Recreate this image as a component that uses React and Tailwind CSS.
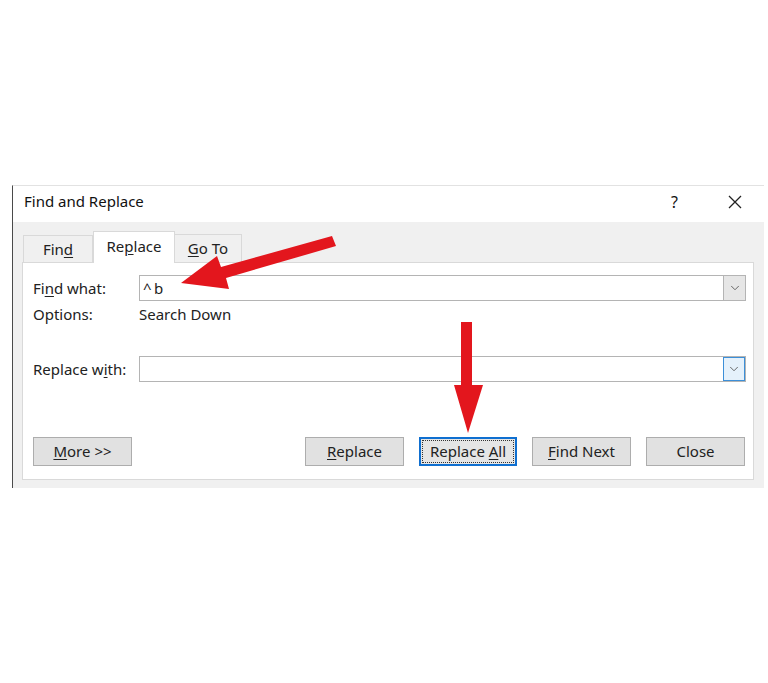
import { ChevronDown } from "lucide-react";

// ─── Small helpers ───────────────────────────────────────────────────────────
function U({ children }) {
  return <span className="underline underline-offset-2">{children}</span>;
}

function Combo({ value, focused }) {
  return (
    <div className="flex h-[26px] flex-1 border border-[#b4b4b4] bg-white">
      <div className="flex flex-1 items-center pl-[3px] text-[15px] text-[#222]">{value}</div>
      <div
        className={
          focused
            ? "flex w-[22px] items-center justify-center border border-[#3c8fd8] bg-[#e5f1fb]"
            : "flex w-[22px] items-center justify-center border-l border-[#b4b4b4] bg-[#e6e6e6]"
        }
      >
        <ChevronDown size={14} strokeWidth={1.5} className="text-[#555]" />
      </div>
    </div>
  );
}

function Btn({ children, primary }) {
  return (
    <div
      className={
        primary
          ? "flex h-[29px] w-[98px] items-center justify-center border-2 border-[#0f6fd0] bg-[#e5e5e5] p-[1px]"
          : "flex h-[29px] w-[99px] items-center justify-center border border-[#adadad] bg-[#e1e1e1]"
      }
    >
      {primary ? (
        <div className="flex h-full w-full items-center justify-center border border-dotted border-[#333] text-[15px] text-[#222]">
          <span>{children}</span>
        </div>
      ) : (
        <span className="text-[15px] text-[#222]">{children}</span>
      )}
    </div>
  );
}

// ─── Red annotation arrows ───────────────────────────────────────────────────
function Arrows() {
  return (
    <svg className="pointer-events-none absolute inset-0" width="768" height="683" viewBox="0 0 768 683">
      <polygon
        fill="#e3161d"
        points="332,236 336,246 226,278 229,289 181,283 217,256 221,267"
      />
      <polygon
        fill="#e3161d"
        points="461,322 472,322 472,385 483,385 468,433 454,385 461,385"
      />
    </svg>
  );
}

// ─── Dialog ──────────────────────────────────────────────────────────────────
export default function App() {
  return (
    <div className="relative h-[683px] w-[768px] overflow-hidden bg-white font-['Segoe_UI','Noto_Sans',sans-serif]">
      <div className="pl-[12px] pt-[185px]">
        <div className="w-[752px] border-l border-t border-l-[#4a4a4a] border-t-[#e2e2e2]">
          {/* title bar */}
          <div className="flex h-[36px] items-center bg-white pb-[5px] pl-[11px] pr-[22px] text-[15px] text-[#111]">
            <span className="flex-1">Find and Replace</span>
            <span className="mr-[50px] text-[16px]">?</span>
            <svg width="14" height="14" viewBox="0 0 14 14" className="text-[#222]">
              <path d="M1 1 L13 13 M13 1 L1 13" stroke="currentColor" strokeWidth="1.3" />
            </svg>
          </div>

          {/* body */}
          <div className="bg-[#f0f0f0] pb-[8px] pl-[9px] pr-[10px] pt-[9px]">
            {/* tabs */}
            <div className="flex h-[31px] items-end pl-[1px]">
              <div className="flex h-[27px] w-[70px] items-center justify-center border border-b-0 border-[#d9d9d9] bg-[#f0f0f0] text-[15px] text-[#222]">
                <span>Fin<U>d</U></span>
              </div>
              <div className="-mb-px relative z-10 flex h-[32px] w-[82px] items-center justify-center border border-b-0 border-[#d9d9d9] bg-white pb-[2px] text-[15px] text-[#222]">
                <span>Re<U>p</U>lace</span>
              </div>
              <div className="flex h-[28px] w-[67px] items-center justify-center border border-b-0 border-l-0 border-[#d9d9d9] bg-[#f0f0f0] text-[15px] text-[#222]">
                <span><U>G</U>o To</span>
              </div>
            </div>

            {/* panel */}
            <div className="h-[218px] border border-[#d9d9d9] bg-white pl-[10px] pr-[7px] pt-[12px] text-[15px] text-[#222]">
              <div className="flex items-center">
                <div className="w-[106px]">Fi<U>n</U>d what:</div>
                <Combo value={"^\u2009b"} />
              </div>
              <div className="mt-[1px] flex h-[24px] items-center">
                <div className="w-[106px]">Options:</div>
                <div>Search Down</div>
              </div>
              <div className="mt-[30px] flex items-center">
                <div className="w-[106px]">Replace w<U>i</U>th:</div>
                <Combo value="" focused />
              </div>
              <div className="mt-[55px] flex items-center pr-[1px]">
                <Btn>
                  <U>M</U>ore &gt;&gt;
                </Btn>
                <div className="flex-1" />
                <div className="flex gap-[15px]">
                  <Btn>
                    <U>R</U>eplace
                  </Btn>
                  <Btn primary>
                    Replace <U>A</U>ll
                  </Btn>
                  <Btn>
                    <U>F</U>ind Next
                  </Btn>
                  <Btn>Close</Btn>
                </div>
              </div>
            </div>
          </div>
        </div>
      </div>
      <Arrows />
    </div>
  );
}
